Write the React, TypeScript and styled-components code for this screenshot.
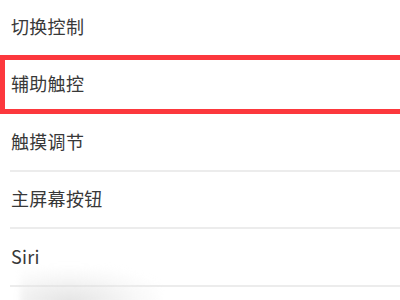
import styled, { createGlobalStyle } from "styled-components";

const items = ["切换控制", "辅助触控", "触摸调节", "主屏幕按钮", "Siri"];
const highlighted = "辅助触控";

const App = () => {
    return (
        <>
            <GlobalStyle />
            <Page>
                <List>
                    {items.map((label) => (
                        <Row key={label}>
                            <Label>{label}</Label>
                            {label === highlighted && <Highlight />}
                        </Row>
                    ))}
                </List>
                <Smudge />
            </Page>
        </>
    );
};

export default App;

const GlobalStyle = createGlobalStyle`
  html, body {
    margin: 0;
    padding: 0;
    background: #fff;
  }
`;

const Page = styled.div`
  position: relative;
  width: 400px;
  height: 300px;
  overflow: hidden;
  background: #fff;
  font-family: "Noto Sans CJK SC", "Noto Sans", sans-serif;
`;

const List = styled.div`
  display: flex;
  flex-direction: column;
  margin-top: -2px;
`;

const Row = styled.div`
  position: relative;
  height: 57.5px;
  display: flex;
  align-items: center;
  padding-left: 11px;
  box-sizing: border-box;

  &::after {
    content: "";
    position: absolute;
    left: 10px;
    right: 0;
    bottom: -1px;
    height: 2px;
    background: #ececec;
  }
`;

const Label = styled.span`
  font-size: 18px;
  color: #383838;
  letter-spacing: 0.3px;
  padding-bottom: 2px;
`;

const Highlight = styled.div`
  position: absolute;
  top: -1px;
  bottom: -1px;
  left: 0;
  right: -10px;
  border: 5px solid #fc383d;
  z-index: 1;
`;

const Smudge = styled.div`
  position: absolute;
  left: 20px;
  top: 268px;
  width: 140px;
  height: 40px;
  background: radial-gradient(ellipse at 35% 85%, rgba(210, 210, 210, 0.6), rgba(235, 235, 235, 0.3) 55%, rgba(255, 255, 255, 0) 80%);
  filter: blur(3px);
`;
